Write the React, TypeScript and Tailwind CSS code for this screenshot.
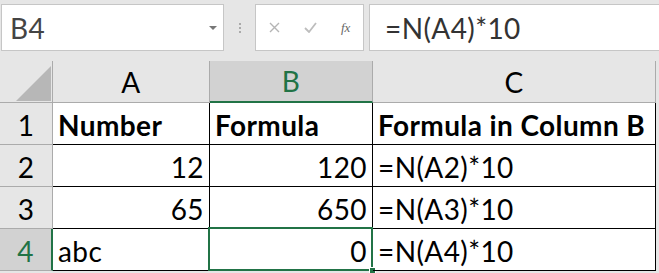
import React from 'react'

const GREEN = 'text-[#217346]'

const rows = [
  { n: '1', a: 'Number', b: 'Formula', c: 'Formula in Column B', bold: true },
  { n: '2', a: '12', b: '120', c: '=N(A2)*10' },
  { n: '3', a: '65', b: '650', c: '=N(A3)*10' },
  { n: '4', a: 'abc', b: '0', c: '=N(A4)*10' },
]

const isNum = (v: string) => /^\d+$/.test(v)

function Cell({ value, bold, width, selected }: { value: string; bold?: boolean; width: string; selected?: boolean }) {
  return (
    <div
      className={`relative ${width} h-full flex items-end border-r border-b border-black px-[5px] pb-[3px] leading-[32px] ${
        isNum(value) ? 'justify-end' : 'justify-start'
      } ${bold ? 'font-bold' : ''}`}
    >
      <span className="whitespace-nowrap">{value}</span>
      {selected && (
        <>
          <div className="absolute -left-[2px] -top-[2px] -right-[1px] -bottom-[1px] border-2 border-[#217346]" />
          <div className="absolute -right-[4px] -bottom-[4px] w-[7px] h-[7px] bg-[#217346] border border-white" />
        </>
      )}
    </div>
  )
}

export default function App() {
  return (
    <div
      className="w-[659px] h-[273px] overflow-hidden bg-[#e6e6e6] text-[28px] tracking-[0.4px] text-black"
      style={{ fontFamily: 'Lato, "Open Sans", sans-serif' }}
    >
      {/* Top bar: name box + formula bar */}
      <div className="flex h-[61px] pt-[4px] pb-[10px]">
        <div className="ml-[1px] w-[223px] h-[47px] bg-white border border-[#c6c6c6] flex items-center justify-between pl-[8px] pr-[6px]">
          <span className="text-[#444] leading-none">B4</span>
          <svg width="8" height="4" viewBox="0 0 8 4"><path d="M0 0h8L4 4z" fill="#777" /></svg>
        </div>
        <div className="w-[31px] flex flex-col items-center justify-center gap-[2px]">
          <span className="w-[2px] h-[2px] bg-[#aaa]" />
          <span className="w-[2px] h-[2px] bg-[#aaa]" />
          <span className="w-[2px] h-[2px] bg-[#aaa]" />
        </div>
        <div className="w-[109px] h-[47px] bg-white border border-[#c6c6c6] flex items-center pl-[13px] gap-[24px]">
          <svg width="11" height="11" viewBox="0 0 11 11"><path d="M1 1l9 9M10 1l-9 9" stroke="#b5b5b5" strokeWidth="1.4" /></svg>
          <svg width="13" height="11" viewBox="0 0 13 11"><path d="M1 6l4 4 7-9" stroke="#bdbdbd" strokeWidth="1.8" fill="none" /></svg>
          <span className="italic text-[13px] tracking-normal text-[#666] leading-none" style={{ fontFamily: '"Liberation Serif", serif' }}>fx</span>
        </div>
        <div className="ml-[5px] flex-1 h-[47px] bg-white border border-[#c6c6c6] border-r-0 flex items-center pl-[15px]">
          <span className="text-[#333] leading-none">=N(A4)*10</span>
        </div>
      </div>

      {/* Column headers */}
      <div className="flex h-[42px]">
        <div className="relative w-[53px] h-full border-r border-b border-[#ababab]">
          <svg className="absolute left-[16px] top-[5px]" width="35" height="35" viewBox="0 0 35 35"><path d="M35 0V35H0z" fill="#b7b7b7" /></svg>
        </div>
        <div className="w-[157px] h-full border-r border-b border-[#ababab] flex items-center justify-center">A</div>
        <div className={`w-[163px] h-full bg-[#d2d2d2] border-r border-[#ababab] border-b-2 border-b-[#217346] flex items-center justify-center ${GREEN}`}>B</div>
        <div className="w-[283px] h-full border-r border-b border-[#ababab] flex items-center justify-center">C</div>
      </div>

      {/* Rows */}
      {rows.map(r => {
        const sel = r.n === '4'
        return (
          <div key={r.n} className="flex h-[42px]">
            <div
              className={`w-[53px] h-full flex items-end justify-center pb-[3px] leading-[32px] border-b border-[#ababab] ${
                sel ? `bg-[#d2d2d2] border-r-2 border-r-[#217346] ${GREEN}` : 'border-r border-r-[#ababab]'
              }`}
            >
              {r.n}
            </div>
            <div className="flex h-full bg-white">
              <Cell value={r.a} bold={r.bold} width="w-[157px]" />
              <Cell value={r.b} bold={r.bold} width="w-[163px]" selected={sel} />
              <Cell value={r.c} bold={r.bold} width="w-[283px]" />
            </div>
          </div>
        )
      })}
    </div>
  )
}
